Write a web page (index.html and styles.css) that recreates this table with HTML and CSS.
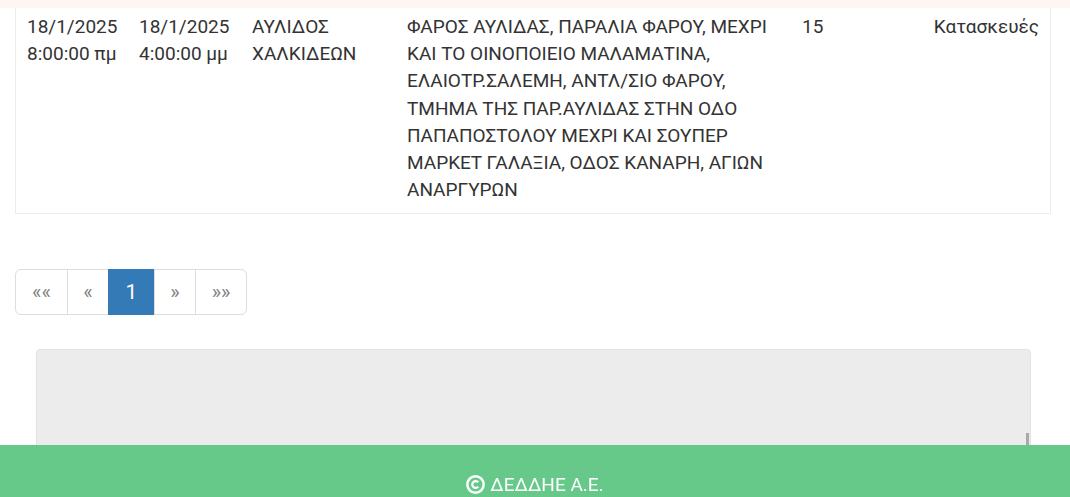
FILE: index.html
```html
<!DOCTYPE html>
<html lang="el">
<head>
  <meta charset="UTF-8" />
  <meta name="viewport" content="width=device-width, initial-scale=1.0"/>
  <title>Διακοπές ρεύματος</title>
  <link rel="stylesheet" href="styles.css">
</head>
<body>
  <div class="top-strip"></div>

  <main class="content">
    <table class="outages">
      <tr>
        <td class="col-from">18/1/2025<br>8:00:00 πμ</td>
        <td class="col-to">18/1/2025<br>4:00:00 μμ</td>
        <td class="col-area">ΑΥΛΙΔΟΣ<br>ΧΑΛΚΙΔΕΩΝ</td>
        <td class="col-desc">ΦΑΡΟΣ ΑΥΛΙΔΑΣ, ΠΑΡΑΛΙΑ ΦΑΡΟΥ, ΜΕΧΡΙ<br>ΚΑΙ ΤΟ ΟΙΝΟΠΟΙΕΙΟ ΜΑΛΑΜΑΤΙΝΑ,<br>ΕΛΑΙΟΤΡ.ΣΑΛΕΜΗ, ΑΝΤΛ/ΣΙΟ ΦΑΡΟΥ,<br>ΤΜΗΜΑ ΤΗΣ ΠΑΡ.ΑΥΛΙΔΑΣ ΣΤΗΝ ΟΔΟ<br>ΠΑΠΑΠΟΣΤΟΛΟΥ ΜΕΧΡΙ ΚΑΙ ΣΟΥΠΕΡ<br>ΜΑΡΚΕΤ ΓΑΛΑΞΙΑ, ΟΔΟΣ ΚΑΝΑΡΗ, ΑΓΙΩΝ<br>ΑΝΑΡΓΥΡΩΝ</td>
        <td class="col-num">15</td>
        <td class="col-type">Κατασκευές</td>
      </tr>
    </table>

    <ul class="pagination">
      <li><a href="#" class="first">««</a></li>
      <li><a href="#" class="prev">«</a></li>
      <li><a href="#" class="active">1</a></li>
      <li><a href="#" class="next">»</a></li>
      <li><a href="#" class="last">»»</a></li>
    </ul>

    <div class="notes">
      <div class="scroll-thumb"></div>
    </div>
  </main>

  <footer>
    <svg class="copy-icon" viewBox="0 0 20 20" width="19" height="19">
      <circle cx="10" cy="10" r="8.6" fill="none" stroke="#fff" stroke-width="2.6"/>
      <path d="M12.9 7.6 A3.6 3.6 0 1 0 12.9 12.4" fill="none" stroke="#fff" stroke-width="2.4"/>
    </svg>
    <span>ΔΕΔΔΗΕ Α.Ε.</span>
  </footer>
</body>
</html>
```

FILE: styles.css
```css
body {
  margin: 0;
  padding: 0;
  font-family: Roboto, "Noto Sans", sans-serif;
  color: #333;
  background: #fff;
}
.top-strip {
  height: 8px;
  background: #fdf6f3;
}
.content {
  padding: 0 15px;
}
.outages {
  width: 1036px;
  table-layout: fixed;
  border-collapse: collapse;
  border: 1px solid #ececec;
  border-top: none;
  font-size: 19px;
  line-height: 27.2px;
}
.outages td {
  vertical-align: top;
  padding: 5px 12px 10px 11px;
  white-space: nowrap;
}
.col-from { width: 89px; }
.col-to { width: 90px; }
.col-area { width: 132px; }
.col-desc { width: 372px; }
.col-num { width: 100px; }
.outages .col-type {
  text-align: right;
  padding-right: 11px;
}

.pagination {
  list-style: none;
  display: flex;
  margin: 55px 0 0;
  padding: 0;
}
.pagination a {
  display: block;
  height: 44px;
  line-height: 44px;
  text-align: center;
  border: 1px solid #ddd;
  margin-left: -1px;
  color: #808080;
  font-size: 20px;
  text-decoration: none;
}
.pagination li:first-child a {
  margin-left: 0;
  border-radius: 6px 0 0 6px;
}
.pagination li:last-child a {
  border-radius: 0 6px 6px 0;
}
.pagination .first { width: 51px; }
.pagination .prev { width: 40px; }
.pagination .next { width: 40px; }
.pagination .last { width: 50px; }
.pagination .active {
  width: 45px;
  background: #337ab7;
  border-color: #337ab7;
  color: #fff;
  font-size: 21px;
}

.notes {
  position: relative;
  margin: 34px 24px 0 21px;
  height: 160px;
  background: #ececec;
  border: 1px solid #e2e2e2;
  border-radius: 4px;
}
.scroll-thumb {
  position: absolute;
  right: 1px;
  top: 83px;
  width: 3px;
  height: 14px;
  background: #a9a9a9;
}

footer {
  position: fixed;
  left: 0;
  right: 0;
  bottom: 0;
  height: 52px;
  box-sizing: border-box;
  padding-top: 26px;
  background: #66c98a;
  color: #fff;
  font-size: 19px;
  line-height: 27px;
  display: flex;
  justify-content: center;
  align-items: flex-start;
  gap: 5px;
}
.copy-icon {
  margin-top: 4px;
}
```
